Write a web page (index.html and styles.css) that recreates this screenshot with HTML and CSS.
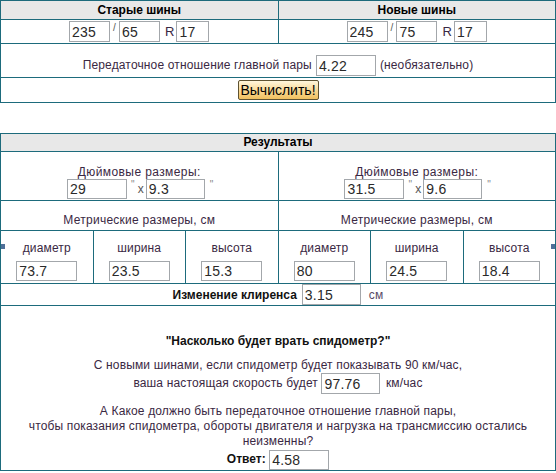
FILE: index.html
```html
<!DOCTYPE html>
<html lang="ru">
<head>
<meta charset="utf-8">
<title>Шинный калькулятор</title>
<link rel="stylesheet" href="styles.css">
</head>
<body>
<table class="grid top">
  <colgroup><col class="c2"><col class="c2"></colgroup>
  <tr>
    <th><div class="hd">Старые шины</div></th>
    <th><div class="hd">Новые шины</div></th>
  </tr>
  <tr>
    <td><div class="sizes">
      <input class="f w41" value="235"><span class="sl">/</span><input class="f w41" value="65"><span class="r">R</span><input class="f w33" value="17">
    </div></td>
    <td><div class="sizes">
      <input class="f w41" value="245"><span class="sl">/</span><input class="f w41" value="75"><span class="r">R</span><input class="f w33" value="17">
    </div></td>
  </tr>
  <tr>
    <td colspan="2"><div class="ratio">
      <span>Передаточное отношение главной пары</span><input class="f w60 mx4" value="4.22"><span>(необязательно)</span>
    </div></td>
  </tr>
  <tr>
    <td colspan="2"><div class="btnrow"><button class="btn" type="button">Вычислить!</button></div></td>
  </tr>
</table>

<table class="grid res">
  <colgroup><col class="c6"><col class="c6"><col class="c6"><col class="c6"><col class="c6"><col class="c6"></colgroup>
  <tr>
    <th colspan="6"><div class="hd2">Результаты</div></th>
  </tr>
  <tr>
    <td colspan="3"><div class="inch">
      <div class="lbl">Дюймовые размеры:</div>
      <div class="inrow"><input class="f w60 h20" value="29"><span class="q">"</span><span class="x">x</span><input class="f w59 h20" value="9.3"><span class="q q2">"</span></div>
    </div></td>
    <td colspan="3"><div class="inch">
      <div class="lbl">Дюймовые размеры:</div>
      <div class="inrow"><input class="f w60 h20" value="31.5"><span class="q">"</span><span class="x">x</span><input class="f w59 h20" value="9.6"><span class="q q2">"</span></div>
    </div></td>
  </tr>
  <tr>
    <td colspan="3"><div class="metric">Метрические размеры, см</div></td>
    <td colspan="3"><div class="metric">Метрические размеры, см</div></td>
  </tr>
  <tr>
    <td class="mark-l"><div class="sub"><div class="sl2">диаметр</div><input class="f w61 h20" value="73.7"></div></td>
    <td><div class="sub"><div class="sl2">ширина</div><input class="f w61 h20" value="23.5"></div></td>
    <td><div class="sub"><div class="sl2">высота</div><input class="f w61 h20" value="15.3"></div></td>
    <td><div class="sub"><div class="sl2">диаметр</div><input class="f w61 h20" value="80"></div></td>
    <td><div class="sub"><div class="sl2">ширина</div><input class="f w61 h20" value="24.5"></div></td>
    <td class="mark-r"><div class="sub"><div class="sl2">высота</div><input class="f w61 h20" value="18.4"></div></td>
  </tr>
  <tr>
    <td colspan="6"><div class="klir"><b class="dark">Изменение клиренса</b><input class="f w59 ml5" value="3.15"><span class="cm">см</span></div></td>
  </tr>
  <tr>
    <td colspan="6"><div class="speedo">
      <div class="title">"Насколько будет врать спидометр?"</div>
      <div class="line l1">С новыми шинами, если спидометр будет показывать 90 км/час,</div>
      <div class="line l2">ваша настоящая скорость будет <input class="f w59 mid" value="97.76"> <span class="kmh">км/час</span></div>
      <div class="line l3">А Какое должно быть передаточное отношение главной пары,<br>чтобы показания спидометра, обороты двигателя и нагрузка на трансмиссию остались<br>неизменны?</div>
      <div class="line l4"><b class="dark">Ответ:</b> <input class="f w60 h20 mid" value="4.58"></div>
    </div></td>
  </tr>
</table>
</body>
</html>
```
FILE: styles.css
```css
body {
  margin: 0;
  background: #fff;
  font-family: "Liberation Sans", Arial, sans-serif;
  font-size: 12px;
  letter-spacing: 0.15px;
  color: #3a2843;
}

.grid {
  border-collapse: collapse;
  table-layout: fixed;
  width: 556px;
}

.grid td,
.grid th {
  border: 1px solid #1d6b7c;
  padding: 0;
  text-align: center;
}

.grid th {
  background: #e8e8e8;
  color: #000;
  font-weight: bold;
  letter-spacing: 0;
}

.c2 { width: 50%; }
.c6 { width: 16.666%; }

.res { margin-top: 30px; }

.hd {
  height: 18px;
  line-height: 18px;
}

.hd2 {
  height: 17px;
  line-height: 17px;
}

/* inputs */
.f {
  box-sizing: border-box;
  height: 21px;
  margin: 0;
  padding: 0 2px;
  border: 1px solid #a3a7ab;
  background: #fff;
  font-family: "Liberation Sans", Arial, sans-serif;
  font-size: 14px;
  letter-spacing: 0.2px;
  color: #2a2a2a;
  outline: none;
}
.h20 { height: 20px; }
.w33 { width: 33px; }
.w41 { width: 41px; }
.w59 { width: 59px; }
.w60 { width: 60px; }
.w61 { width: 61px; }
.mx4 { margin: 0 4px; }
.ml5 { margin-left: 5px; }
.mid { vertical-align: middle; }

.sizes {
  height: 23px;
  display: flex;
  align-items: center;
  justify-content: center;
}

.sl {
  align-self: flex-start;
  margin: 3px 3px 0;
  font-size: 10px;
  line-height: 10px;
  color: #555;
}

.r {
  margin: 0 2px 0 5px;
  font-size: 13px;
  color: #3a2843;
}

.ratio {
  box-sizing: border-box;
  height: 33px;
  padding-bottom: 1px;
  display: flex;
  align-items: flex-end;
  justify-content: center;
  line-height: 21px;
}

.btnrow {
  height: 24px;
  display: flex;
  align-items: center;
  justify-content: center;
}

.btn {
  box-sizing: border-box;
  width: 81px;
  height: 20px;
  margin: 0;
  padding: 0;
  border: 1px solid #5e5232;
  border-radius: 2px;
  background: linear-gradient(#fff6dc, #f8d58c 60%, #f0c060);
  font-family: "Liberation Sans", Arial, sans-serif;
  font-size: 14px;
  line-height: 18px;
  color: #000;
}

.inch {
  box-sizing: border-box;
  height: 48px;
  padding-bottom: 1px;
  display: flex;
  flex-direction: column;
  justify-content: flex-end;
}

.lbl {
  line-height: 14px;
  letter-spacing: 0.4px;
}

.inrow {
  display: flex;
  justify-content: center;
  align-items: center;
  padding-left: 2px;
}

.q {
  align-self: flex-start;
  margin: 1px 3px 0 4px;
  font-size: 10px;
  line-height: 10px;
  color: #888;
}
.q2 { margin: 1px 0 0 5px; }

.x {
  margin-right: 2px;
  color: #555;
}

.metric {
  box-sizing: border-box;
  height: 29px;
  padding-bottom: 3px;
  display: flex;
  align-items: flex-end;
  justify-content: center;
  line-height: 14px;
  letter-spacing: 0.25px;
}

.sub {
  box-sizing: border-box;
  height: 52px;
  padding-bottom: 2px;
  display: flex;
  flex-direction: column;
  justify-content: flex-end;
  align-items: center;
}

.sl2 {
  line-height: 14px;
  margin-bottom: 6px;
}

.mark-l {
  background: linear-gradient(#4f6f98, #4f6f98) no-repeat 0 13px / 4px 5px;
}
.mark-r {
  background: linear-gradient(#4f6f98, #4f6f98) no-repeat right 13px / 4px 5px;
}

.klir {
  height: 21px;
  display: flex;
  align-items: center;
  justify-content: center;
}

.dark { color: #111; letter-spacing: 0; }

.cm {
  margin-left: 8px;
  color: #5a4a66;
}

.speedo {
  box-sizing: border-box;
  height: 164px;
  padding-top: 28px;
}

.title {
  font-weight: bold;
  color: #111;
  line-height: 15px;
  letter-spacing: 0;
}

.line { line-height: 15px; }
.l1 { margin-top: 9px; }
.l2 { height: 21px; line-height: 21px; }
.l3 { margin-top: 10px; }
.l4 { height: 20px; line-height: 20px; }

.kmh { margin-left: 2px; }
```
